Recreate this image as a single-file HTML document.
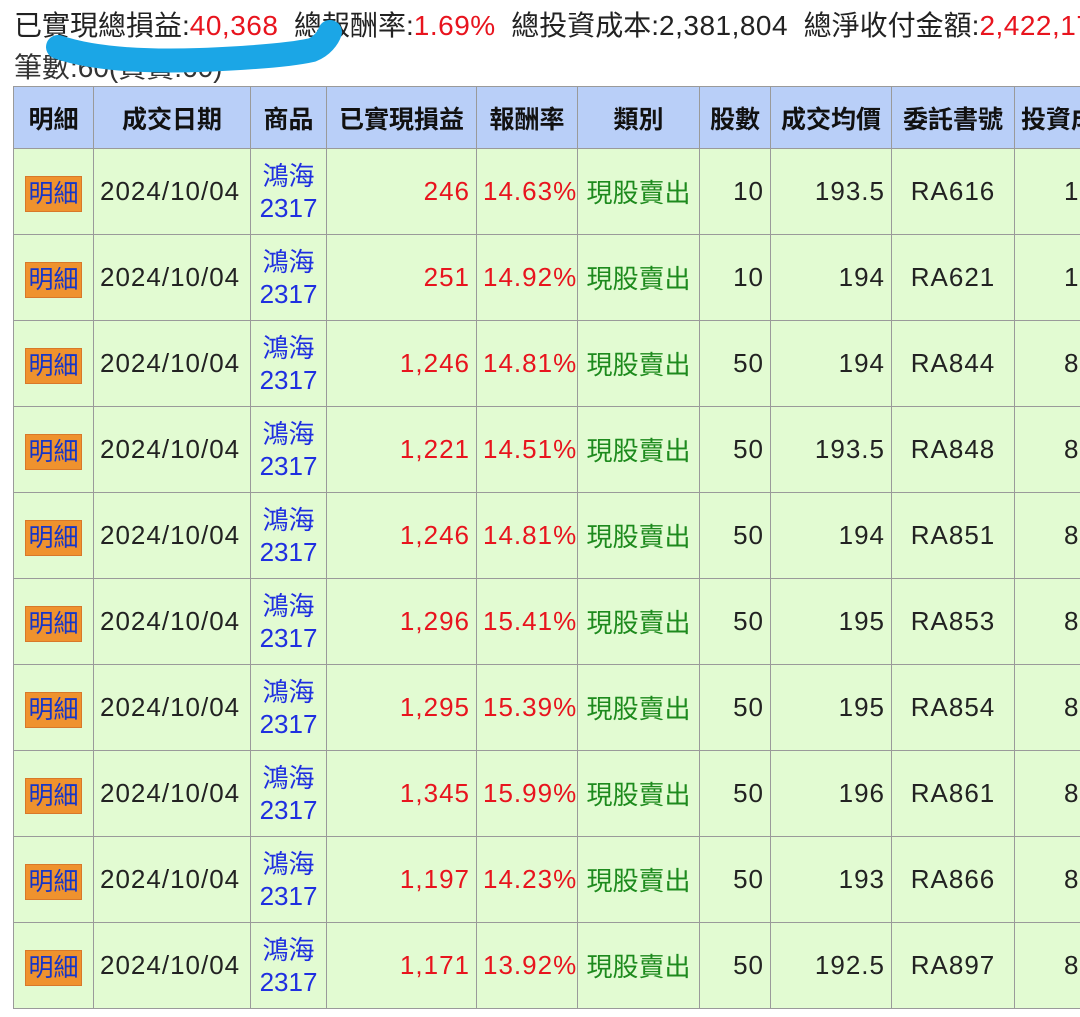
<!DOCTYPE html>
<html><head><meta charset="utf-8"><style>
body{margin:0;background:#fff;width:1080px;height:1017px;overflow:hidden;position:relative;font-family:"Liberation Sans","Noto Sans CJK TC",sans-serif;}
.l1{position:absolute;left:14px;top:4px;font-size:28px;white-space:nowrap;color:#222}
.l2{position:absolute;left:14px;top:46px;font-size:28px;white-space:nowrap;color:#333}
.n{letter-spacing:0.5px}
.r{color:#e8141e}
table{position:absolute;left:13px;top:86px;border-collapse:collapse;table-layout:fixed;width:1140px}
td,th{border:1.5px solid #9a9a9a;font-size:26px;padding:0 6px;white-space:nowrap;overflow:hidden}
th{background:#b9cff8;height:61px;font-weight:bold;color:#111;font-size:25px}
td{background:#e2fbd2;height:85px;color:#222;letter-spacing:1px}
.b{background:#ef922e;color:#1636c8;padding:3px 2px;font-size:25px;border:1px solid #d8782a;letter-spacing:0}
.bl{color:#1f2fe0;text-align:center;line-height:32px;letter-spacing:0;padding:0}
.rt{text-align:right}.c{text-align:center}
.g{color:#1d8a1d;letter-spacing:0}
.lc{padding-left:49px}
</style></head><body>
<div class="l1">已實現總損益:<span class="r n">40,368</span>&nbsp; 總報酬率:<span class="r n">1.69%</span>&nbsp; 總投資成本:<span class="n">2,381,804</span>&nbsp; 總淨收付金額:<span class="r n">2,422,176</span></div>
<div class="l2">筆數:60(買賣:60)</div>
<svg style="position:absolute;left:0;top:0" width="400" height="90"><path d="M58 47 C90 58 140 62 200 60 C250 58 290 55 312 50 C322 46 328 38 330 32" stroke="#1ba6e6" stroke-width="24" fill="none" stroke-linecap="round"/></svg>
<table>
<colgroup><col style="width:80px"><col style="width:157px"><col style="width:76px"><col style="width:150px"><col style="width:101px"><col style="width:122px"><col style="width:71px"><col style="width:121px"><col style="width:123px"><col style="width:139px"></colgroup>
<tr><th>明細</th><th>成交日期</th><th>商品</th><th>已實現損益</th><th>報酬率</th><th>類別</th><th>股數</th><th>成交均價</th><th>委託書號</th><th style="text-align:left">投資成本</th></tr>
<tr><td class="c"><span class="b">明細</span></td><td>2024/10/04</td><td class="bl">鴻海<br>2317</td><td class="rt r">246</td><td class="r">14.63%</td><td class="g c">現股賣出</td><td class="rt">10</td><td class="rt">193.5</td><td class="c">RA616</td><td class="lc">1,935</td></tr>
<tr><td class="c"><span class="b">明細</span></td><td>2024/10/04</td><td class="bl">鴻海<br>2317</td><td class="rt r">251</td><td class="r">14.92%</td><td class="g c">現股賣出</td><td class="rt">10</td><td class="rt">194</td><td class="c">RA621</td><td class="lc">1,940</td></tr>
<tr><td class="c"><span class="b">明細</span></td><td>2024/10/04</td><td class="bl">鴻海<br>2317</td><td class="rt r">1,246</td><td class="r">14.81%</td><td class="g c">現股賣出</td><td class="rt">50</td><td class="rt">194</td><td class="c">RA844</td><td class="lc">8,700</td></tr>
<tr><td class="c"><span class="b">明細</span></td><td>2024/10/04</td><td class="bl">鴻海<br>2317</td><td class="rt r">1,221</td><td class="r">14.51%</td><td class="g c">現股賣出</td><td class="rt">50</td><td class="rt">193.5</td><td class="c">RA848</td><td class="lc">8,700</td></tr>
<tr><td class="c"><span class="b">明細</span></td><td>2024/10/04</td><td class="bl">鴻海<br>2317</td><td class="rt r">1,246</td><td class="r">14.81%</td><td class="g c">現股賣出</td><td class="rt">50</td><td class="rt">194</td><td class="c">RA851</td><td class="lc">8,700</td></tr>
<tr><td class="c"><span class="b">明細</span></td><td>2024/10/04</td><td class="bl">鴻海<br>2317</td><td class="rt r">1,296</td><td class="r">15.41%</td><td class="g c">現股賣出</td><td class="rt">50</td><td class="rt">195</td><td class="c">RA853</td><td class="lc">8,700</td></tr>
<tr><td class="c"><span class="b">明細</span></td><td>2024/10/04</td><td class="bl">鴻海<br>2317</td><td class="rt r">1,295</td><td class="r">15.39%</td><td class="g c">現股賣出</td><td class="rt">50</td><td class="rt">195</td><td class="c">RA854</td><td class="lc">8,700</td></tr>
<tr><td class="c"><span class="b">明細</span></td><td>2024/10/04</td><td class="bl">鴻海<br>2317</td><td class="rt r">1,345</td><td class="r">15.99%</td><td class="g c">現股賣出</td><td class="rt">50</td><td class="rt">196</td><td class="c">RA861</td><td class="lc">8,700</td></tr>
<tr><td class="c"><span class="b">明細</span></td><td>2024/10/04</td><td class="bl">鴻海<br>2317</td><td class="rt r">1,197</td><td class="r">14.23%</td><td class="g c">現股賣出</td><td class="rt">50</td><td class="rt">193</td><td class="c">RA866</td><td class="lc">8,700</td></tr>
<tr><td class="c"><span class="b">明細</span></td><td>2024/10/04</td><td class="bl">鴻海<br>2317</td><td class="rt r">1,171</td><td class="r">13.92%</td><td class="g c">現股賣出</td><td class="rt">50</td><td class="rt">192.5</td><td class="c">RA897</td><td class="lc">8,700</td></tr>
</table>
</body></html>
